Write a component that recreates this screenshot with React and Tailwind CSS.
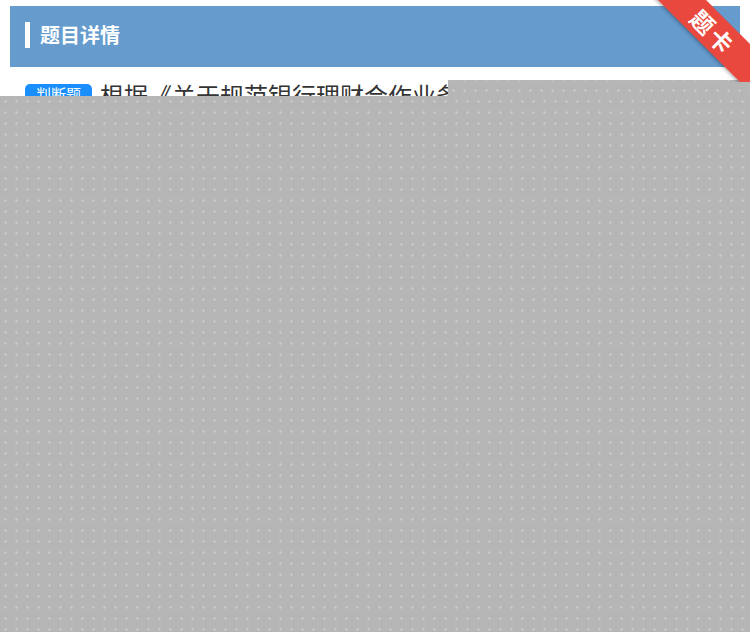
import React from 'react';

const font = { fontFamily: '"Noto Sans CJK SC", "Noto Sans", sans-serif' };

function Ribbon() {
    return (
        <div className="absolute top-0 left-[650px] w-[100px] h-[82px] overflow-hidden">
            {/* fold behind the header */}
            <div className="absolute left-[90px] top-[66px] w-[8px] h-[14px] bg-[#9e2c24] [clip-path:polygon(0_0,100%_40%,100%_100%,0_100%)]" />
            <div className="absolute left-[-10px] top-[16px] w-[150px] h-[34px] rotate-45 bg-[#e8483d] shadow-[0_2px_3px_rgba(0,0,0,0.25)] flex items-center justify-center">
                <span className="text-white text-[23px] font-bold leading-none tracking-[3px] ml-[-4px]">题卡</span>
            </div>
        </div>
    );
}

export default function App() {
    return (
        <div className="relative w-[750px] h-[632px] bg-white overflow-hidden" style={font}>
            <div className="pt-[6px] px-[10px]">
                <div className="h-[61px] bg-[#659bcd] flex items-center pl-[15px] pb-[3px]">
                    <div className="w-[5px] h-[26px] bg-white" />
                    <h1 className="ml-[10px] text-white text-[20px] font-bold leading-none">题目详情</h1>
                </div>
            </div>

            <div className="px-[25px] pt-[11px] flex items-start gap-[8px]">
                <span className="mt-[6px] shrink-0 rounded-[5px] bg-[#1a8ffc] text-white text-[15px] leading-[20px] px-[11px]">判断题</span>
                <p className="text-[24px] leading-[34px] text-[#333]">
                    根据《关于规范银行理财合作业务的通知》，商业银行理财产品不得投资于本行或其他银行的信贷资产。
                </p>
            </div>

            {/* gray loading mask */}
            <div className="absolute left-[448px] right-0 top-[80px] h-[16px] bg-[#b6b6b6] bg-[radial-gradient(circle,#c8c8c8_1px,transparent_1.5px)] bg-[length:11px_11px] bg-[position:0_-6px]" />
            <div className="absolute left-0 right-0 top-[96px] bottom-0 bg-[#b6b6b6] bg-[radial-gradient(circle,#c8c8c8_1px,transparent_1.5px)] bg-[length:11px_11px]" />

            <Ribbon />
        </div>
    );
}
